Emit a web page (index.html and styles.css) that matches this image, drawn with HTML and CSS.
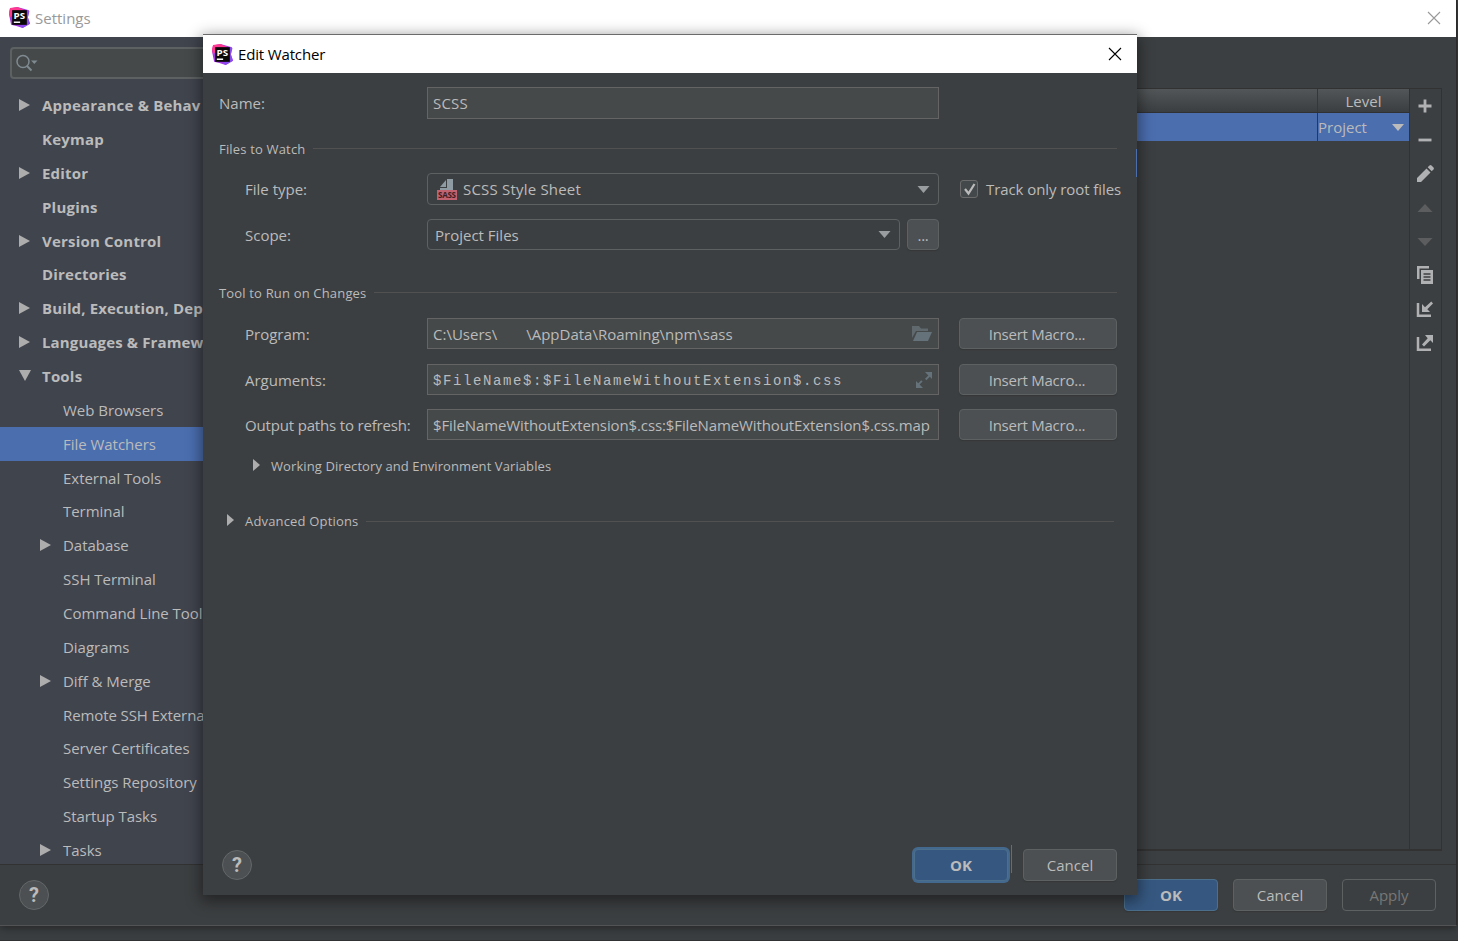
FILE: index.html
```html
<!DOCTYPE html>
<html lang="en">
  <head>
    <meta charset="UTF-8" />
    <meta name="viewport" content="width=device-width, initial-scale=1.0" />
    <title>Settings</title>
    <link rel="stylesheet" href="styles.css">
  </head>

  <body>
    <!-- shared icons -->
    <svg class="sprite" width="0" height="0">
      <symbol id="logo" viewBox="0 0 20 20">
        <path d="M1 1.5L8 0l11 3-1 7 2 6-7 4-6-2-5-1L0 7z" fill="#a238e0" />
        <path d="M1 1l7-1 7 3-9 2-5 5-1-5z" fill="#ff3890" />
        <path d="M17 3l2.5 1-1.5 6 2 6-7 4-3-2 6-3z" fill="#8a4cf0" />
        <rect x="3" y="3" width="14" height="14" fill="#0a0709" />
        <text x="4.300" y="11" class="logo-text" textLength="11" lengthAdjust="spacingAndGlyphs">PS</text>
        <rect x="4.600" y="13.800" width="6" height="1.400" fill="#fff" />
      </symbol>
      <symbol id="close" viewBox="0 0 14 14">
        <path d="M1 1l12 12M13 1L1 13" stroke="currentColor" stroke-width="1.1" fill="none" />
      </symbol>
      <symbol id="right" viewBox="0 0 11 12" preserveAspectRatio="none">
        <path d="M0 0l11 6-11 6z" fill="currentColor" />
      </symbol>
      <symbol id="down" viewBox="0 0 12 11">
        <path d="M0 0h12L6 11z" fill="currentColor" />
      </symbol>
      <symbol id="drop" viewBox="0 0 12 7">
        <path d="M0 0h12L6 7z" fill="currentColor" />
      </symbol>
    </svg>

    <div class="window">
      <div class="titlebar">
        <svg class="logo"><use href="#logo" /></svg>
        <span class="title">Settings</span>
        <svg class="close"><use href="#close" /></svg>
      </div>

      <div class="main">
        <div class="sidebar">
          <div class="search">
            <svg width="24" height="18" viewBox="0 0 24 18">
              <circle cx="7" cy="7.5" r="6" fill="none" stroke="#7f8b91" stroke-width="1.5" />
              <path d="M11 12l4.500 4.500" stroke="#7f8b91" stroke-width="2" />
              <path d="M15 6.500h6.500l-3.200 3.500z" fill="#7f8b91" />
            </svg>
          </div>
          <ul class="tree">
            <li class="top"><svg class="arrow"><use href="#right" /></svg>Appearance &amp; Behav</li>
            <li class="top">Keymap</li>
            <li class="top"><svg class="arrow"><use href="#right" /></svg>Editor</li>
            <li class="top">Plugins</li>
            <li class="top"><svg class="arrow"><use href="#right" /></svg>Version Control</li>
            <li class="top">Directories</li>
            <li class="top tight"><svg class="arrow"><use href="#right" /></svg>Build, Execution, Dep</li>
            <li class="top tight"><svg class="arrow"><use href="#right" /></svg>Languages &amp; Framew</li>
            <li class="top"><svg class="arrow open"><use href="#down" /></svg>Tools</li>
            <li>Web Browsers</li>
            <li class="selected">File Watchers</li>
            <li>External Tools</li>
            <li>Terminal</li>
            <li><svg class="arrow"><use href="#right" /></svg>Database</li>
            <li>SSH Terminal</li>
            <li>Command Line Tool</li>
            <li>Diagrams</li>
            <li><svg class="arrow"><use href="#right" /></svg>Diff &amp; Merge</li>
            <li class="remote">Remote SSH Externa</li>
            <li>Server Certificates</li>
            <li>Settings Repository</li>
            <li>Startup Tasks</li>
            <li><svg class="arrow"><use href="#right" /></svg>Tasks</li>
          </ul>
        </div>

        <div class="panel">
          <div class="table">
            <div class="thead">
              <div class="cell-name"></div>
              <div class="cell-level">Level</div>
            </div>
            <div class="trow">
              <div class="cell-name"></div>
              <div class="cell-level">Project <svg width="12" height="7"><use href="#drop" /></svg></div>
            </div>
          </div>
          <div class="tools">
            <svg viewBox="0 0 18 18"><path d="M9 2.500v13M2.500 9h13" stroke="#afb1b3" stroke-width="2.800" /></svg>
            <svg viewBox="0 0 18 18"><path d="M2.500 9h13" stroke="#afb1b3" stroke-width="2.800" /></svg>
            <svg viewBox="0 0 18 18"><path d="M1 17v-4L10.500 3.500l4 4L5 17zM11.700 2.300L13.500.500q1-.8 2 0l2 2q.8 1 0 2l-1.800 1.800z" fill="#afb1b3" /></svg>
            <svg viewBox="0 0 18 18"><path d="M1.500 13h15L9 5z" fill="#5b5d5e" /></svg>
            <svg viewBox="0 0 18 18"><path d="M1.500 5h15L9 13z" fill="#5b5d5e" /></svg>
            <svg viewBox="0 0 18 18"><path d="M1 0h12v2.500H3.500V13H1z" fill="#afb1b3" /><path d="M5 4h12v14H5zM7.500 7.300v1.400h7V7.300zM7.500 10.300v1.400h7v-1.400zM7.500 13.300v1.400h7v-1.400z" fill="#afb1b3" fill-rule="evenodd" /></svg>
            <svg viewBox="0 0 18 18"><path d="M2 3v12.700h13" stroke="#afb1b3" stroke-width="2.500" fill="none" /><path d="M6 4v8h8l-2.700-2.700L17 3.500 15.300 1.500 9 7.200z" fill="#afb1b3" /></svg>
            <svg viewBox="0 0 18 18"><path d="M2 3v12.700h13" stroke="#afb1b3" stroke-width="2.500" fill="none" /><path d="M9 1h8v8l-2.700-2.700L8 12.500 6 10.500l5.700-6.200z" fill="#afb1b3" /></svg>
          </div>
        </div>
      </div>

      <div class="footer">
        <div class="help">?</div>
        <div class="btn primary">OK</div>
        <div class="btn">Cancel</div>
        <div class="btn disabled">Apply</div>
      </div>
    </div>

    <!-- Edit Watcher dialog over the settings window -->
    <div class="dialog">
      <div class="titlebar">
        <svg class="logo"><use href="#logo" /></svg>
        <span class="title">Edit Watcher</span>
        <svg class="close"><use href="#close" /></svg>
      </div>

      <div class="form">
        <div class="row name">
          <label>Name:</label>
          <div class="input type">SCSS</div>
        </div>

        <div class="section files">Files to Watch</div>
        <div class="row sub">
          <label>File type:</label>
          <div class="combo">
            <svg width="20" height="21" viewBox="0 0 20 21">
              <path d="M3 8l6-7v7zM10 0h6v11H3V9h7z" fill="#8e9ba3" />
              <rect y="11" width="20" height="10" fill="#c2616f" />
              <text x="1" y="19" class="sass" textLength="18">SASS</text>
            </svg>
            <span class="type">SCSS Style Sheet</span>
            <svg class="drop"><use href="#drop" /></svg>
          </div>
          <div class="checkbox">
            <svg width="13" height="13" viewBox="0 0 13 13"><path d="M2 6l3.500 4.500L11.500 1" stroke="#bbbbbb" stroke-width="2.200" fill="none" /></svg>
          </div>
          <span class="track">Track only root files</span>
        </div>
        <div class="row sub scope">
          <label>Scope:</label>
          <div class="combo"><span>Project Files</span><svg class="drop"><use href="#drop" /></svg></div>
          <div class="btn more">...</div>
        </div>

        <div class="section changes">Tool to Run on Changes</div>
        <div class="row sub program">
          <label>Program:</label>
          <div class="input">
            <span>C:\Users\</span><span class="path">\AppData\Roaming\npm\sass</span>
            <svg class="end" width="20" height="15" viewBox="0 0 20 15"><path d="M0 12V0h7l2 2.500h7V5H4z" fill="#5f696e" /><path d="M5 6h15l-4 9H1z" fill="#65727a" /></svg>
          </div>
          <div class="btn">Insert Macro...</div>
        </div>
        <div class="row sub arguments">
          <label>Arguments:</label>
          <div class="input">
            <span class="mono">$FileName$:$FileNameWithoutExtension$.css</span>
            <svg class="end" width="16" height="16" viewBox="0 0 16 16"><path d="M9 0h7v7l-2.200-2.200-3.400 3.400-1.400-1.400 3.400-3.400zM0 9l2.200 2.200 3-3 1.400 1.400-3 3L7 16H0z" fill="#65727a" /></svg>
          </div>
          <div class="btn">Insert Macro...</div>
        </div>
        <div class="row sub output">
          <label>Output paths to refresh:</label>
          <div class="input"><span class="out">$FileNameWithoutExtension$.css:$FileNameWithoutExtension$.css.map</span></div>
          <div class="btn">Insert Macro...</div>
        </div>

        <div class="expander"><svg><use href="#right" /></svg>Working Directory and Environment Variables</div>
        <div class="section advanced"><svg><use href="#right" /></svg>Advanced Options</div>
      </div>

      <div class="dialog-footer">
        <div class="help">?</div>
        <div class="btn primary focused">OK</div>
        <div class="btn">Cancel</div>
        <i class="mark ok-mark"></i>
      </div>
      <i class="mark edge-mark"></i>
    </div>
  </body>
</html>
```
FILE: styles.css
```css
* {
  box-sizing: border-box;
}

body {
  margin: 0;
  height: 941px;
  overflow: hidden;
  background-color: #3b3e40;
  border-bottom: 1px solid #2f3133;
  color: #bbbbbb;
  font-family: "Open Sans", "Noto Sans", sans-serif;
  font-size: 15px;
  white-space: nowrap;
}

svg {
  display: block;
  flex-shrink: 0;
}

.sprite {
  position: absolute;
}

.logo-text {
  font: bold 8.5px "Open Sans", sans-serif;
  fill: #fff;
}

/* Settings window */
.window {
  display: flex;
  flex-direction: column;
  width: 1457px;
  height: 926px;
  background-color: #3c3f41;
  border-right: 1px solid #2b2b2b;
  border-bottom: 1px solid #515354;
  box-shadow: 0 2px 8px rgba(0, 0, 0, 0.4);
}

.titlebar {
  display: flex;
  flex-shrink: 0;
  align-items: center;
  height: 37px;
  padding: 0 15px 0 9px;
  background-color: #fff;
  color: #999;
}

.window .titlebar {
  padding-bottom: 2px;
}

.logo {
  width: 21px;
  height: 21px;
  margin-right: 5px;
}

.title {
  flex: 1;
}

.close {
  width: 14px;
  height: 14px;
}

.main {
  display: flex;
  flex: 1;
  min-height: 0;
  border-bottom: 1px solid #323232;
}

.sidebar {
  width: 203px;
  overflow: hidden;
  background-color: #40444d;
}

.search {
  display: flex;
  align-items: center;
  width: 300px;
  height: 32px;
  margin: 10px 0 9.2px 10px;
  padding-left: 4px;
  background-color: #45494a;
  border: 2px solid #5e6162;
  border-radius: 4px;
}

.tree {
  margin: 0;
  padding: 0;
  list-style: none;
}

.tree li {
  display: flex;
  align-items: center;
  height: 33.86px;
  padding-left: 63px;
  letter-spacing: -0.03px;
}

.tree .top {
  padding-left: 42px;
  font-weight: bold;
  letter-spacing: 0.2px;
}

.tree .tight {
  letter-spacing: 0.13px;
}

.tree .remote {
  letter-spacing: -0.1px;
}

.arrow {
  width: 11px;
  height: 12px;
  margin: 0 12px 0 -23px;
  color: #adadad;
}

.arrow.open {
  width: 12px;
  height: 11px;
  margin-right: 11px;
}

.tree .selected {
  background-color: #4b6eaf;
}

.panel {
  display: flex;
  flex: 1;
  margin: 51px 14px 13px 0;
  border: 1px solid #323232;
  border-bottom-width: 2px;
}

.table {
  flex: 1;
}

.thead,
.trow {
  display: flex;
}

.thead {
  height: 24px;
  background: linear-gradient(#525658, #3b3e40);
  border-bottom: 1px solid #2f3133;
}

.trow {
  height: 28px;
  background-color: #4b6eaf;
}

.cell-name {
  flex: 1;
}

.cell-level {
  display: flex;
  align-items: center;
  justify-content: space-between;
  width: 92px;
  padding-right: 5px;
  border-left: 1px solid #35383a;
}

.thead .cell-level {
  justify-content: center;
  padding: 0;
}

.tools {
  display: flex;
  flex-direction: column;
  align-items: center;
  gap: 15.9px;
  width: 32px;
  padding: 8px 1px 0 0;
  border-left: 1px solid #323232;
}

.tools svg {
  width: 18px;
  height: 18px;
}

.footer {
  display: flex;
  flex-shrink: 0;
  align-items: center;
  gap: 15px;
  height: 60px;
  padding: 0 20px 0 19px;
}

.help {
  width: 30px;
  height: 30px;
  margin-right: auto;
  border: 1px solid #646768;
  border-radius: 50%;
  background-color: #4c5052;
  font: bold 20px/28px Roboto, sans-serif;
  text-align: center;
}

.btn {
  width: 94px;
  height: 32px;
  border: 1px solid #5e6162;
  border-radius: 4px;
  background-color: #4c5052;
  box-shadow: 0 1px 1px #353739;
  line-height: 31px;
  text-align: center;
}

.btn.primary {
  background-color: #365880;
  border-color: #4c708c;
  font-weight: bold;
}

.btn.disabled {
  background-color: transparent;
  box-shadow: none;
  color: #777;
}

/* Edit Watcher dialog */
.dialog {
  position: absolute;
  left: 203px;
  top: 34px;
  display: flex;
  flex-direction: column;
  width: 934px;
  height: 861px;
  border-top: 1px solid #6b6b6b;
  background-color: #3c3f41;
  box-shadow: 0 4px 14px 2px rgba(0, 0, 0, 0.45);
}

.dialog .titlebar {
  height: 38px;
  color: #000;
}

.dialog .title {
  letter-spacing: -0.15px;
}

.form {
  flex: 1;
  padding: 14px 20px 0 16px;
}

.row {
  display: flex;
  align-items: center;
  height: 32px;
  margin-bottom: 14px;
}

.row > * {
  flex-shrink: 0;
}

.row label {
  width: 208px;
}

.sub label {
  padding-left: 26px;
}

.output label {
  letter-spacing: -0.17px;
}

.row.name {
  margin-bottom: 20px;
}

.row.scope {
  height: 31px;
  margin-bottom: 33px;
}

.row.program {
  height: 31px;
  margin-bottom: 15px;
}

.row.arguments {
  height: 31px;
}

.row.output {
  height: 31px;
  margin-bottom: 16px;
}

.input,
.combo {
  display: flex;
  align-items: center;
  width: 512px;
  height: 100%;
  padding: 0 6px 0 5px;
  border: 1px solid #646464;
  background-color: #45494a;
}

.combo {
  padding: 0 8px 0 9px;
  border-color: #5e6162;
  border-radius: 4px;
  background-color: transparent;
}

.combo span {
  flex: 1;
}

.type {
  letter-spacing: 0.2px;
}

.combo .type {
  margin-left: 6px;
}

.scope .combo {
  width: 473px;
  padding-left: 7px;
}

.drop {
  width: 13px;
  height: 7px;
  color: #9a9da0;
}

.sass {
  font: bold 8px "Open Sans", sans-serif;
  fill: #3c1f25;
}

.checkbox {
  display: flex;
  align-items: center;
  justify-content: center;
  width: 18px;
  height: 18px;
  margin: 0 8px 0 21px;
  border: 1px solid #6b6b6b;
  border-radius: 3px;
  background-color: #43494a;
}

.track {
  letter-spacing: -0.08px;
}

.row .btn {
  width: 158px;
  height: 100%;
  margin-left: 20px;
  padding-right: 2px;
  letter-spacing: -0.25px;
}

.row .more {
  width: 32px;
  margin-left: 7px;
  padding-right: 0;
}

.path {
  margin-left: 29px;
}

.end {
  margin-left: auto;
}

.mono {
  padding-top: 2px;
  font: 14px "Liberation Mono", monospace;
  letter-spacing: 1.6px;
}

.out {
  letter-spacing: -0.11px;
}

.section {
  display: flex;
  align-items: center;
  height: 20px;
  font-size: 13px;
  letter-spacing: 0.17px;
}

.section::after {
  content: "";
  flex: 1;
  height: 1px;
  margin-left: 8px;
  background-color: #515151;
}

.section.files {
  margin-bottom: 14px;
}

.section.changes {
  margin-bottom: 15px;
}

.files::after,
.changes::after {
  margin-bottom: 2px;
}

.expander {
  display: flex;
  align-items: center;
  height: 20px;
  margin: 0 0 35px 34px;
  font-size: 13px;
  letter-spacing: 0.09px;
}

.expander svg,
.advanced svg {
  width: 7px;
  height: 12px;
  margin: 0 11px 2px 0;
  color: #adadad;
}

.advanced {
  padding: 0 3px 0 8px;
}

.dialog-footer {
  position: relative;
  display: flex;
  align-items: center;
  gap: 15px;
  height: 61px;
  padding: 0 20px 0 19px;
}

.focused {
  box-shadow: 0 0 0 2px #43698e;
}

.mark {
  position: absolute;
  width: 1px;
  height: 28px;
  background-color: #4b6eaf;
}

.ok-mark {
  right: 125px;
  top: 11px;
}

.edge-mark {
  right: 0;
  top: 114px;
}
```
